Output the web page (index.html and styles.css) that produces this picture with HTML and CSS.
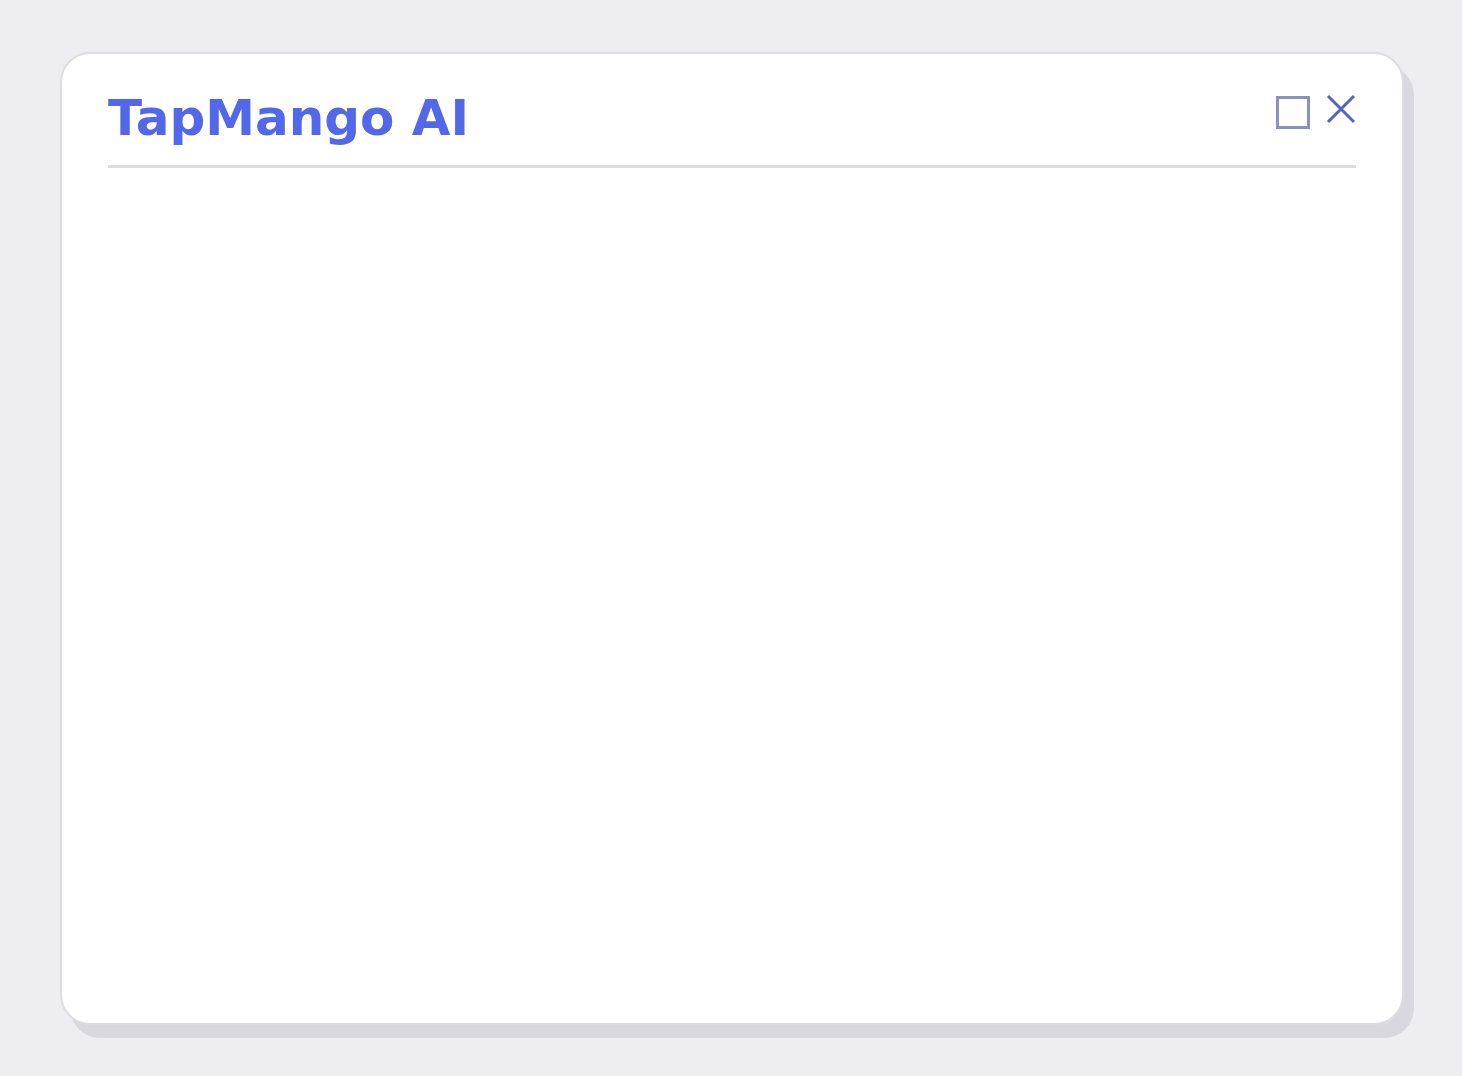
FILE: index.html
```html
<!DOCTYPE html>
<html lang="en">
<head>
  <meta charset="UTF-8" />
  <title>TapMango AI</title>
  <link rel="stylesheet" href="styles.css">
</head>
<body>
  <div class="window">
    <div class="window-header">
      <h1 class="title">TapMango AI</h1>
      <div class="controls">
        <svg class="ctrl ctrl-max" width="34" height="33" viewBox="0 0 34 33">
          <rect x="1.5" y="1.5" width="31" height="30" fill="none" stroke="#8a90c2" stroke-width="3"/>
        </svg>
        <svg class="ctrl ctrl-close" width="30" height="30" viewBox="0 0 30 30">
          <path d="M2 2 L28 28 M28 2 L2 28" stroke="#5561c4" stroke-width="3" fill="none"/>
        </svg>
      </div>
    </div>
    <div class="window-body"></div>
  </div>
</body>
</html>
```

FILE: styles.css
```css
html, body {
  margin: 0;
  padding: 0;
  background: #ededf2;
}
body {
  font-family: "DejaVu Sans", "Liberation Sans", sans-serif;
  padding: 52px 0 51px 60px;
}
.window {
  box-sizing: border-box;
  width: 1344px;
  height: 973px;
  background: #fff;
  border: 2px solid #dcdce2;
  border-radius: 30px;
  box-shadow: 10px 13px 0 #d8d8de;
  padding: 0 46px;
  display: flex;
  flex-direction: column;
}
.window-header {
  display: flex;
  justify-content: space-between;
  align-items: flex-start;
  padding: 34px 0 17px 0;
  border-bottom: 3px solid #dcdce0;
}
.title {
  margin: 0;
  font-size: 50px;
  line-height: 1.2;
  font-weight: bold;
  color: #5268e8;
}
.controls {
  display: flex;
  align-items: flex-start;
  gap: 16px;
  margin-top: 6px;
}
.ctrl-max {
  margin-top: 2px;
}
.window-body {
  flex: 1;
}
```
